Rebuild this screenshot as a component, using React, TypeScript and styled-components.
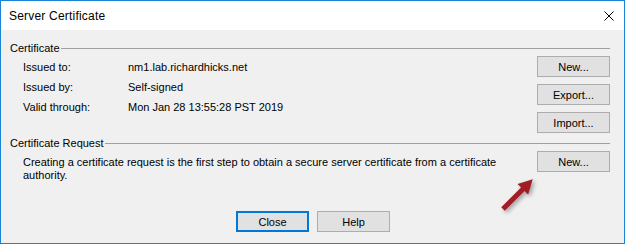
import React from 'react';
import styled, {createGlobalStyle} from 'styled-components';

const GlobalStyle = createGlobalStyle`
  html, body {
    margin: 0;
    padding: 0;
    background: #ffffff;
  }
  * {
    box-sizing: border-box;
  }
`

const Frame = styled.div`
  position: relative;
  width: 625px;
  height: 244px;
  border: 1px solid #1883d7;
  background: #f0f0f0;
  display: flex;
  flex-direction: column;
  font-family: "Liberation Sans", Arial, sans-serif;
  font-size: 11px;
  color: #000000;
`

const TitleBar = styled.div`
  height: 29px;
  flex: none;
  background: #ffffff;
  display: flex;
  align-items: center;
  justify-content: space-between;
  padding: 0 10px 0 8px;
  >.title{
    font-size: 12px;
    letter-spacing: 0.2px;
  }
  >svg{
    display: block;
  }
`

const Body = styled.div`
  flex: 1;
  display: flex;
  flex-direction: column;
  padding: 10px 14px 11px 9px;
`

const GroupHeader = styled.div<{$gap?: number}>`
  height: 15px;
  display: flex;
  align-items: center;
  margin-top: ${p => p.$gap ?? 0}px;
  >span{
    padding-right: 1px;
  }
  >.rule{
    flex: 1;
    height: 1px;
    margin-top: 1px;
    background: #a0a0a0;
  }
`

const GroupContent = styled.div`
  display: flex;
  justify-content: space-between;
  margin-top: 1px;
`

const InfoGrid = styled.div`
  display: grid;
  grid-template-columns: 105px auto;
  grid-auto-rows: 20px;
  align-items: center;
  padding: 1px 0 0 13px;
`

const ButtonColumn = styled.div`
  display: flex;
  flex-direction: column;
  gap: 7px;
`

const Description = styled.p`
  margin: 0;
  width: 500px;
  padding: 5px 0 0 13px;
  line-height: 13px;
`

const DialogButton = styled.button<{$focused?: boolean}>`
  width: 73px;
  height: 21px;
  padding: 0;
  background: #e1e1e1;
  border: ${p => p.$focused ? '2px solid #0078d7' : '1px solid #adadad'};
  font-family: inherit;
  font-size: 11px;
  color: #000000;
`

const Footer = styled.div`
  margin-top: auto;
  display: flex;
  justify-content: center;
  gap: 8px;
  padding-left: 6px;
`

const Arrow = styled.svg`
  position: absolute;
  left: 0;
  top: 0;
  filter: drop-shadow(2px 2px 2px rgba(0, 0, 0, 0.35));
  pointer-events: none;
`

const details = [
  {label: 'Issued to:', value: 'nm1.lab.richardhicks.net'},
  {label: 'Issued by:', value: 'Self-signed'},
  {label: 'Valid through:', value: 'Mon Jan 28 13:55:28 PST 2019'},
]

export default function App() {
  return (
    <>
      <GlobalStyle/>
      <Frame>
        <TitleBar>
          <span className={'title'}>Server Certificate</span>
          <svg width="10" height="10" viewBox="0 0 10 10">
            <path d="M0.5 0.5 L9.5 9.5 M9.5 0.5 L0.5 9.5" stroke="#000" strokeWidth="1" fill="none"/>
          </svg>
        </TitleBar>
        <Body>
          <GroupHeader>
            <span>Certificate</span>
            <div className={'rule'}/>
          </GroupHeader>
          <GroupContent>
            <InfoGrid>
              {details.map(d => (
                <React.Fragment key={d.label}>
                  <span>{d.label}</span>
                  <span>{d.value}</span>
                </React.Fragment>
              ))}
            </InfoGrid>
            <ButtonColumn>
              <DialogButton>New...</DialogButton>
              <DialogButton>Export...</DialogButton>
              <DialogButton>Import...</DialogButton>
            </ButtonColumn>
          </GroupContent>
          <GroupHeader $gap={2}>
            <span>Certificate Request</span>
            <div className={'rule'}/>
          </GroupHeader>
          <GroupContent>
            <Description>
              Creating a certificate request is the first step to obtain a secure server certificate from a certificate authority.
            </Description>
            <DialogButton>New...</DialogButton>
          </GroupContent>
          <Footer>
            <DialogButton $focused>Close</DialogButton>
            <DialogButton>Help</DialogButton>
          </Footer>
        </Body>
        <Arrow width="623" height="243" viewBox="0 0 623 243">
          <g transform="translate(502 208) rotate(-45)">
            <polygon points="0,-2.5 28,-2.5 28,-7.5 42,0 28,7.5 28,2.5 0,2.5" fill="#a11d26"/>
          </g>
        </Arrow>
      </Frame>
    </>
  )
}
